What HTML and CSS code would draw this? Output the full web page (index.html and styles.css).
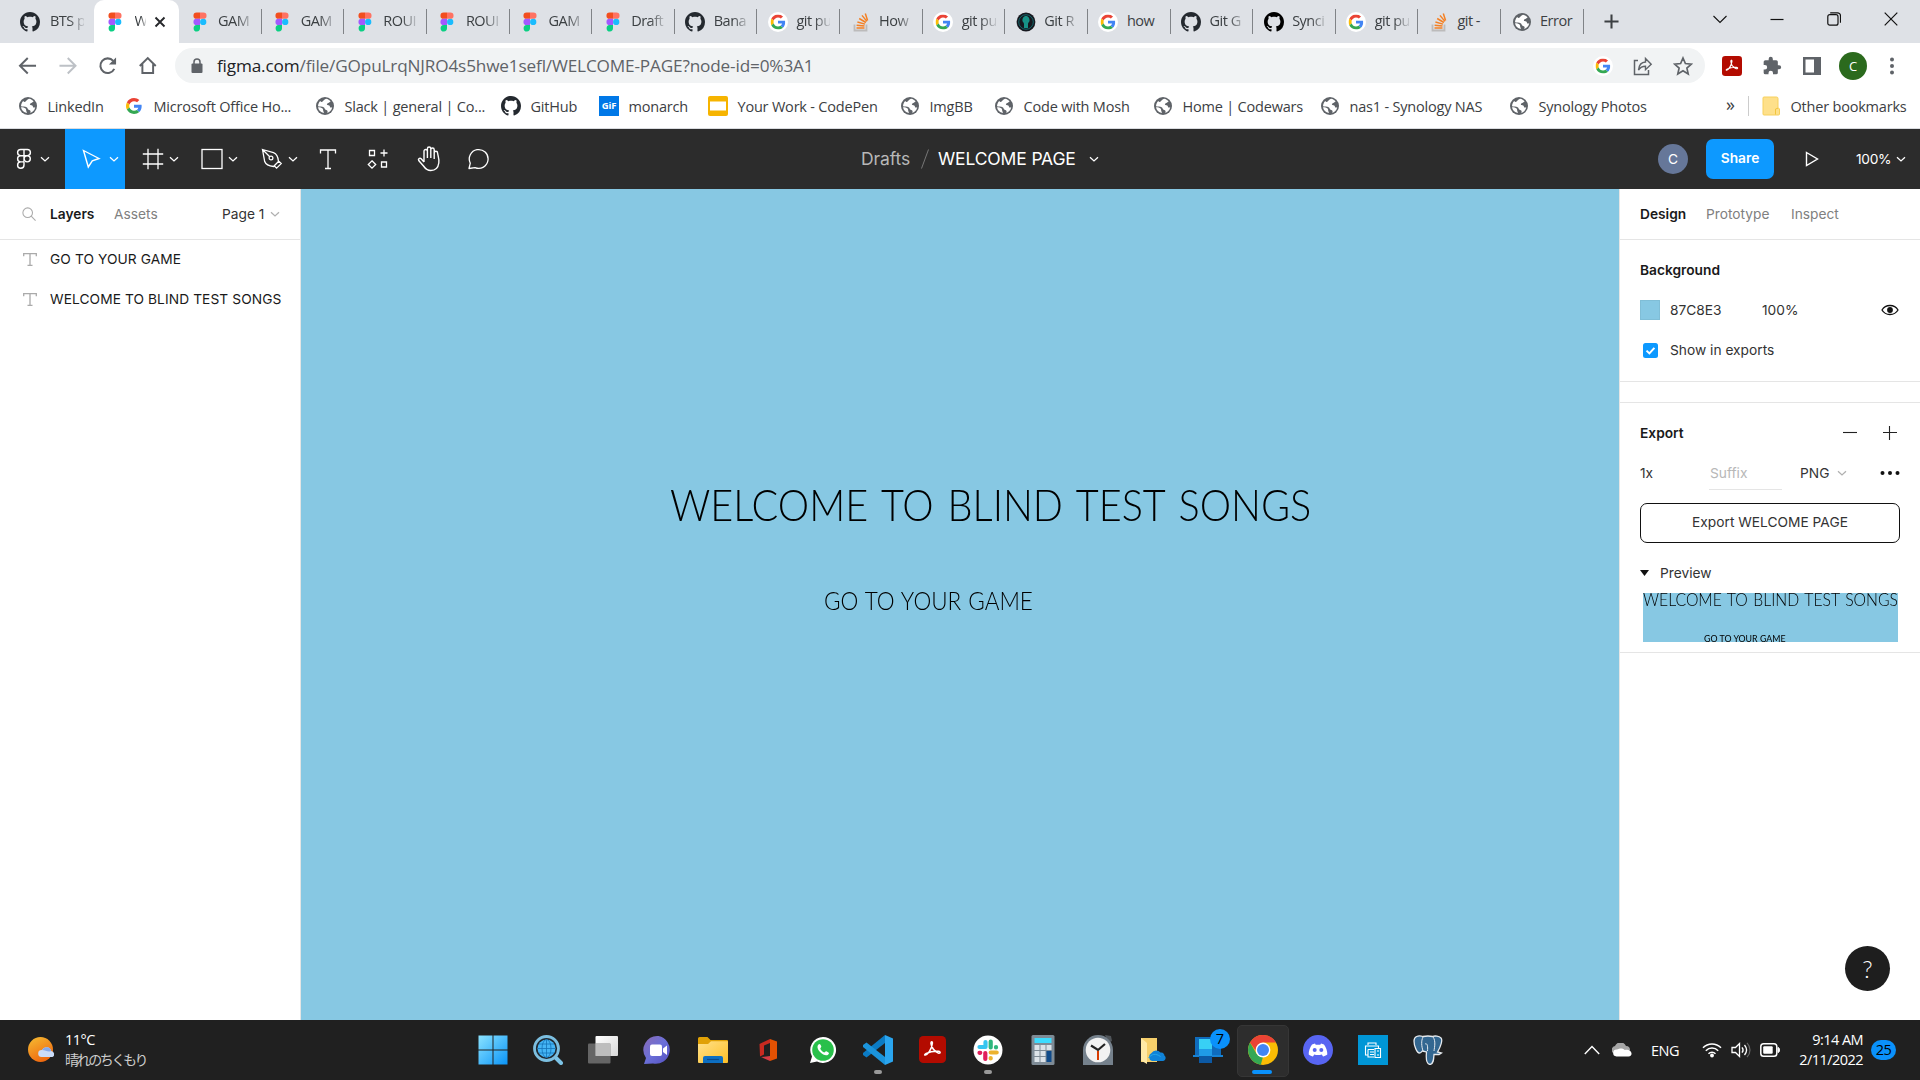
FILE: index.html
```html
<!DOCTYPE html>
<html lang="en">
<head>
<meta charset="utf-8">
<title>WELCOME PAGE</title>
<link rel="stylesheet" href="styles.css">
</head>
<body>
<svg class="defs" aria-hidden="true">
  <defs>
    <linearGradient id="win" x1="0" y1="0" x2="1" y2="1"><stop offset="0" stop-color="#8be3ff"/><stop offset="1" stop-color="#0a94f7"/></linearGradient>
    <linearGradient id="sun" x1="0" y1="0" x2=".5" y2="1"><stop offset="0" stop-color="#f5bd33"/><stop offset="1" stop-color="#ef6a10"/></linearGradient>
    <linearGradient id="fold" x1="0" y1="0" x2="1" y2="1"><stop offset="0" stop-color="#ffe18a"/><stop offset="1" stop-color="#fdbf27"/></linearGradient>
    <linearGradient id="chat" x1="0" y1="0" x2="1" y2="1"><stop offset="0" stop-color="#8a6bb5"/><stop offset=".5" stop-color="#6a6fd8"/><stop offset="1" stop-color="#5450c0"/></linearGradient>
    <linearGradient id="glass" x1="0" y1="0" x2="1" y2="1"><stop offset="0" stop-color="#fff"/><stop offset="1" stop-color="#d8d8d8"/></linearGradient>
  </defs>
  <symbol id="github" viewBox="0 0 16 16"><path d="M8 0C3.58 0 0 3.58 0 8c0 3.54 2.29 6.53 5.47 7.59.4.07.55-.17.55-.38 0-.19-.01-.82-.01-1.49-2.01.37-2.53-.49-2.69-.94-.09-.23-.48-.94-.82-1.13-.28-.15-.68-.52-.01-.53.63-.01 1.08.58 1.23.82.72 1.21 1.87.87 2.33.66.07-.52.28-.87.51-1.07-1.78-.2-3.64-.89-3.64-3.95 0-.87.31-1.59.82-2.15-.08-.2-.36-1.02.08-2.12 0 0 .67-.21 2.2.82.64-.18 1.32-.27 2-.27s1.36.09 2 .27c1.53-1.04 2.2-.82 2.2-.82.44 1.1.16 1.92.08 2.12.51.56.82 1.27.82 2.15 0 3.07-1.87 3.75-3.65 3.95.29.25.54.73.54 1.48 0 1.07-.01 1.93-.01 2.2 0 .21.15.46.55.38A8.01 8.01 0 0 0 16 8c0-4.42-3.58-8-8-8z" fill="currentColor"/></symbol>
  <symbol id="figma" viewBox="0 0 20 20"><path d="M6.600.500H10v6.300H6.600a3.150 3.150 0 0 1 0-6.300z" fill="#f24e1e"/><path d="M10 .500h3.400a3.150 3.150 0 0 1 0 6.300H10z" fill="#ff7262"/><path d="M6.600 6.800H10v6.300H6.600a3.150 3.150 0 0 1 0-6.300z" fill="#a259ff"/><circle cx="13.200" cy="9.950" r="3.150" fill="#1abcfe"/><path d="M6.600 13.100H10v3.200a3.200 3.200 0 1 1-3.400-3.200z" fill="#0acf83"/></symbol>
  <symbol id="g" viewBox="0 0 48 48"><path fill="#EA4335" d="M24 9.5c3.54 0 6.71 1.22 9.21 3.6l6.85-6.85C35.9 2.38 30.47 0 24 0 14.62 0 6.51 5.38 2.56 13.22l7.98 6.19C12.43 13.72 17.74 9.5 24 9.5z"/><path fill="#4285F4" d="M46.98 24.55c0-1.57-.15-3.09-.38-4.55H24v9.02h12.94c-.58 2.96-2.26 5.48-4.78 7.18l7.73 6c4.51-4.18 7.09-10.36 7.09-17.65z"/><path fill="#FBBC05" d="M10.53 28.59c-.48-1.45-.76-2.99-.76-4.59s.27-3.14.76-4.59l-7.98-6.19C.92 16.46 0 20.12 0 24c0 3.88.92 7.54 2.56 10.78l7.97-6.19z"/><path fill="#34A853" d="M24 48c6.48 0 11.93-2.13 15.89-5.81l-7.73-6c-2.15 1.45-4.92 2.3-8.16 2.3-6.26 0-11.57-4.22-13.47-9.91l-7.98 6.19C6.51 42.62 14.62 48 24 48z"/></symbol>
  <symbol id="gdisc" viewBox="0 0 20 20"><circle cx="10" cy="10" r="10" fill="#fff"/><use href="#g" x="2.500" y="2.500" width="15" height="15"/></symbol>
  <symbol id="stack" viewBox="0 0 20 20"><path d="M3.500 12.500v6h12v-6" fill="none" stroke="#bcbbbb" stroke-width="1.800"/><path d="M5.500 16h8M5.600 13.200l7.900.8M6.400 10l7.600 2.100M8.200 6.500l6.700 4M11 3.400l4.900 6M14.300 1.600l2.300 7" fill="none" stroke="#f48024" stroke-width="1.500"/></symbol>
  <symbol id="kraken" viewBox="0 0 20 20"><circle cx="10" cy="10" r="9.400" fill="#16181f"/><circle cx="10" cy="10" r="7.300" fill="none" stroke="#11666a" stroke-width="1"/><path d="M10 4c2.600 0 3.600 2.600 3.600 4.600 0 1.500-1.600 2-1.600 3.300V16H8v-4.100c0-1.300-1.600-1.800-1.600-3.300 0-2 1-4.600 3.600-4.600z" fill="#179287"/></symbol>
  <symbol id="globe" viewBox="0 0 20 20"><circle cx="10" cy="10" r="9" fill="#5f6368"/><path d="M11 2.800c2 .3 3.600 1.300 4.600 2.700-1 .4-1.300 1.300-2.400 1.600-1.200.3-1.800 1.600-.8 2 1.500.3 2.500.6 2.600 1.800.1.800 1 .8 2.200.4-.4 2.600-2.300 4.900-4.900 5.700.7-1.700.2-2.800-1.200-3.100-1.500-.4-1.300-2.200-2.500-2.700-1.400-.5-3.600-.4-5.600-.9.100-2 .8-4 2.300-5.300.6 1.300 1.600 1.300 2.300.6.700-.7 1.200-1.700 3.400-2.800z" fill="#fff"/><path d="M3 11.300c2 .1 3.500.4 4.600 1.100.8 1 .3 1.700.8 2.900.2.700.6 1.200.5 1.700C5.600 16.600 3.400 14.300 3 11.300z" fill="#fff"/></symbol>
  <symbol id="chev" viewBox="0 0 10 10"><path d="M1 3.200l4 3.800 4-3.800" fill="none" stroke="currentColor" stroke-width="1.250"/></symbol>
  <symbol id="textT" viewBox="0 0 14 13"><path d="M.700 3.300V.700h12.600v2.600M7 .700v11.600M4.500 12.300h5" fill="none" stroke="currentColor" stroke-width="1.300"/></symbol>
  <symbol id="acro" viewBox="0 0 28 28"><rect width="28" height="28" rx="4.500" fill="#b30b00"/><path d="M6.500 19.800c2.500-.500 6.600-5.500 7.400-12.300.2-2.300-1.700-2.100-1.500.2.400 3.800 3.400 8.400 7.600 10 2.200.7 2.700-1.600.3-1.800-4-.3-9.300.6-12.800 2.300-1.500.8-2.200 1.600-1 1.600z" fill="none" stroke="#fff" stroke-width="1.600"/></symbol>
  <symbol id="logoF" viewBox="0 0 16 22"><path d="M8 1.500v12M8 1.500H4.700a3 3 0 0 0 0 6.200H8m0-6.200h3.300a3 3 0 0 1 0 6.200H8m0 0H4.700a3 3 0 0 0 0 6.200H8m3.200-6.200a3.100 3.100 0 1 1 0 6.200 3.100 3.100 0 0 1 0-6.200M8 13.900v3.200a3.200 3.200 0 1 1-3.300-3.200" fill="none" stroke="#fff" stroke-width="1.400"/></symbol>
</svg>

<header class="tabstrip">
  <div class="tab first"><svg class="fav"><use href="#github"/></svg><span>BTS p</span></div>
  <div class="tab active"><svg class="fav"><use href="#figma"/></svg><span>W</span><svg class="close" viewBox="0 0 12 12"><path d="M1.500 1.500l9 9m0-9l-9 9" stroke="#26282b" stroke-width="1.900"/></svg></div>
  <div class="tab"><svg class="fav"><use href="#figma"/></svg><span>GAM</span></div>
  <div class="tab"><svg class="fav"><use href="#figma"/></svg><span>GAM</span></div>
  <div class="tab"><svg class="fav"><use href="#figma"/></svg><span>ROUI</span></div>
  <div class="tab"><svg class="fav"><use href="#figma"/></svg><span>ROUI</span></div>
  <div class="tab"><svg class="fav"><use href="#figma"/></svg><span>GAM</span></div>
  <div class="tab"><svg class="fav"><use href="#figma"/></svg><span>Draft</span></div>
  <div class="tab"><svg class="fav"><use href="#github"/></svg><span>Bana</span></div>
  <div class="tab"><svg class="fav"><use href="#gdisc"/></svg><span>git pu</span></div>
  <div class="tab"><svg class="fav"><use href="#stack"/></svg><span>How</span></div>
  <div class="tab"><svg class="fav"><use href="#gdisc"/></svg><span>git pu</span></div>
  <div class="tab"><svg class="fav"><use href="#kraken"/></svg><span>Git R</span></div>
  <div class="tab"><svg class="fav"><use href="#gdisc"/></svg><span class="solid">how</span></div>
  <div class="tab"><svg class="fav"><use href="#github"/></svg><span>Git G</span></div>
  <div class="tab"><svg class="fav black"><use href="#github"/></svg><span>Synci</span></div>
  <div class="tab"><svg class="fav"><use href="#gdisc"/></svg><span>git pu</span></div>
  <div class="tab"><svg class="fav"><use href="#stack"/></svg><span class="solid">git -</span></div>
  <div class="tab"><svg class="fav"><use href="#globe"/></svg><span class="solid">Error</span></div>
  <svg class="newtab" viewBox="0 0 16 16"><path d="M8 .500v15M.500 8h15" stroke="#3c4043" stroke-width="2.200"/></svg>
  <div class="winctl">
    <svg viewBox="0 0 14 14"><path d="M.500 4l6.500 6.500L13.500 4" fill="none" stroke="#111" stroke-width="1.100"/></svg>
    <svg viewBox="0 0 14 14"><path d="M.500 7.500h13" stroke="#111" stroke-width="1.200"/></svg>
    <svg viewBox="0 0 14 14"><rect x=".8" y="2.700" width="10.200" height="10.500" rx="2" fill="none" stroke="#111" stroke-width="1.200"/><path d="M3.200.8h7.300a3 3 0 0 1 3 3v7" fill="none" stroke="#111" stroke-width="1.200"/></svg>
    <svg viewBox="0 0 14 14"><path d="M.7.7l12.600 12.600m0-12.600L.7 13.300" stroke="#111" stroke-width="1.200"/></svg>
  </div>
</header>

<div class="address">
  <div class="nav">
    <svg viewBox="0 0 20 20"><path d="M18.500 10H2.500M10 2l-8 8 8 8" fill="none" stroke="#5f6368" stroke-width="2"/></svg>
    <svg viewBox="0 0 20 20"><path d="M1.500 10h16M10 2l8 8-8 8" fill="none" stroke="#bdc1c6" stroke-width="2"/></svg>
    <svg viewBox="0 0 20 20"><path d="M16.700 13.200A7.500 7.500 0 1 1 15.600 5" fill="none" stroke="#5f6368" stroke-width="2.100"/><path d="M18.500 1.500v7.300h-7.300z" fill="#5f6368"/></svg>
    <svg viewBox="0 0 20 20"><path d="M4.500 8.500v9h11v-9M1.800 10.200L10 2.200l8.200 8" fill="none" stroke="#5f6368" stroke-width="2"/></svg>
  </div>
  <div class="omnibox">
    <svg class="lock" viewBox="0 0 12 16"><rect x=".5" y="5.500" width="11" height="9.500" rx="1" fill="#5f6368"/><path d="M3 6V4a3 3 0 0 1 6 0v2" fill="none" stroke="#5f6368" stroke-width="1.500"/></svg>
    <span class="url"><b>figma.com</b>/file/GOpuLrqNJRO4s5hwe1sefl/WELCOME-PAGE?node-id=0%3A1</span>
    <svg class="obi" viewBox="0 0 20 20"><use href="#gdisc"/></svg>
    <svg class="obi" viewBox="0 0 20 20"><path d="M5 4.500H1.500v14h14V14" fill="none" stroke="#5f6368" stroke-width="1.500"/><path d="M5.500 14c.5-5 3-7.800 7-8V2.500l5.700 5.700-5.700 5.500v-3.500c-3 0-5.200 1-7 3.800z" fill="none" stroke="#5f6368" stroke-width="1.400"/></svg>
    <svg class="obi" viewBox="0 0 20 20"><path d="M10 2l2.400 5.500 6 .6-4.500 4 1.300 5.800L10 14.800l-5.200 3.100 1.300-5.800-4.500-4 6-.6z" fill="none" stroke="#5f6368" stroke-width="1.700"/></svg>
  </div>
  <div class="ext">
    <svg viewBox="0 0 28 28"><use href="#acro"/></svg>
    <svg viewBox="0 0 24 24"><path d="M20.500 11H19V7a2 2 0 0 0-2-2h-4V3.500a2.500 2.500 0 0 0-5 0V5H4a2 2 0 0 0-2 2v3.800h1.500a2.700 2.700 0 0 1 0 5.400H2V20a2 2 0 0 0 2 2h3.800v-1.500a2.700 2.700 0 0 1 5.400 0V22H17a2 2 0 0 0 2-2v-4h1.500a2.500 2.500 0 0 0 0-5z" fill="#5f6368"/></svg>
    <svg viewBox="0 0 20 20"><path d="M1 1h18v18H1zM3.500 3.500v13h8.500v-13z" fill="#5f6368" fill-rule="evenodd"/></svg>
    <span class="me">C</span>
    <svg viewBox="0 0 20 20"><g fill="#5f6368"><circle cx="10" cy="3.500" r="2"/><circle cx="10" cy="10" r="2"/><circle cx="10" cy="16.500" r="2"/></g></svg>
  </div>
</div>

<nav class="bookmarks">
  <a><svg class="fav"><use href="#globe"/></svg>LinkedIn</a>
  <a><svg class="fav small"><use href="#g"/></svg>Microsoft Office Ho...</a>
  <a><svg class="fav"><use href="#globe"/></svg>Slack | general | Co...</a>
  <a><svg class="fav"><use href="#github"/></svg>GitHub</a>
  <a><span class="gif">GiF</span>monarch</a>
  <a><svg class="fav" viewBox="0 0 20 20"><rect width="20" height="20" rx="2" fill="#f6b400"/><rect x="2" y="5.500" width="16" height="9" fill="#fff"/></svg>Your Work - CodePen</a>
  <a><svg class="fav"><use href="#globe"/></svg>ImgBB</a>
  <a><svg class="fav"><use href="#globe"/></svg>Code with Mosh</a>
  <a><svg class="fav"><use href="#globe"/></svg>Home | Codewars</a>
  <a><svg class="fav"><use href="#globe"/></svg>nas1 - Synology NAS</a>
  <a><svg class="fav"><use href="#globe"/></svg>Synology Photos</a>
  <span class="more">»</span>
  <a class="other"><svg class="fav" viewBox="0 0 20 20"><path d="M3 1h12.500a1.500 1.500 0 0 1 1.500 1.500V12l1.500.8V18a1 1 0 0 1-1 1H3a1 1 0 0 1-1-1V2a1 1 0 0 1 1-1z" fill="#fee08a" stroke="#f7d05c"/><path d="M14.500 18.500V13l2.500-.8" fill="none" stroke="#f2c53d"/></svg>Other bookmarks</a>
</nav>

<div class="toolbar">
  <div class="tools">
    <div class="tool t-menu"><svg class="ic-logo"><use href="#logoF"/></svg><svg class="ch"><use href="#chev"/></svg></div>
    <div class="tool t-move"><svg class="ic" viewBox="0 0 22 22"><path d="M3.500 2.500l15.500 8-6.700 2.300-4 6.200z" fill="none" stroke="#fff" stroke-width="1.400"/></svg><svg class="ch"><use href="#chev"/></svg></div>
    <div class="tool t-frame"><svg class="ic" viewBox="0 0 22 22"><path d="M6 .8v20.400M16 .8v20.400M.8 6h20.400M.8 16h20.400" stroke="#fff" stroke-width="1.300"/></svg><svg class="ch"><use href="#chev"/></svg></div>
    <div class="tool t-frame"><svg class="ic" viewBox="0 0 22 22"><rect x="1" y="1.500" width="20" height="19" fill="none" stroke="#fff" stroke-width="1.300"/></svg><svg class="ch"><use href="#chev"/></svg></div>
    <div class="tool t-frame"><svg class="ic" viewBox="0 0 22 22"><path d="M1.500 1.500l11 3.200c3.600 1.300 4.600 4.500 5 8.800l-5 5c-4.300-.4-7.500-1.400-8.800-5zM2 2l7 7M17.800 13.200l2.400 2.400-4.600 4.600-2.400-2.400" fill="none" stroke="#fff" stroke-width="1.300"/><circle cx="10" cy="10" r="1.900" fill="none" stroke="#fff" stroke-width="1.200"/></svg><svg class="ch"><use href="#chev"/></svg></div>
    <div class="tool one"><svg class="ic" viewBox="0 0 22 22"><path d="M3.500 5.500V2h15v3.500M11 2v18.500M8 20.500h6" fill="none" stroke="#fff" stroke-width="1.300"/></svg></div>
    <div class="tool one"><svg class="ic" viewBox="0 0 22 22"><path d="M2.500 2.500h5v5h-5zM14.500 14h5v5h-5zM17 1.500v7M13.500 5h7M5 12.800l3.700 3.700L5 20.200l-3.700-3.700z" fill="none" stroke="#fff" stroke-width="1.300"/></svg></div>
    <div class="tool one"><svg class="ic hand" viewBox="0 0 24 26"><path d="M7 16V5.200a1.700 1.700 0 0 1 3.400 0V12 2.700a1.700 1.700 0 0 1 3.400 0V12 3.700a1.700 1.700 0 0 1 3.400 0V13 7a1.700 1.700 0 0 1 3.400 0c.3 3 1.900 6.200 1.200 10-.6 4.500-3.600 7.500-8 7.500-3.500 0-5.500-1.800-7.300-4.500L1.700 14.500c-.9-1.500 1-3 2.500-1.700L7 16" fill="none" stroke="#fff" stroke-width="1.400"/></svg></div>
    <div class="tool one"><svg class="ic" viewBox="0 0 22 22"><path d="M1 20.500l1.300-5.300A9.400 9.400 0 1 1 7 19.600z" fill="none" stroke="#fff" stroke-width="1.300" stroke-linejoin="round"/></svg></div>
  </div>
  <div class="crumb"><span class="drafts">Drafts</span><svg class="slash" viewBox="0 0 8 20"><path d="M.500 19.500l7-19" stroke="#777"/></svg><span class="name">WELCOME PAGE</span><svg class="ch"><use href="#chev"/></svg></div>
  <div class="actions">
    <span class="avatar">C</span><span class="share">Share</span>
    <svg class="play" viewBox="0 0 14 16"><path d="M1.500 1.500L12.500 8l-11 6.500z" fill="none" stroke="#fff" stroke-width="1.400"/></svg>
    <span class="zoom">100%</span><svg class="ch"><use href="#chev"/></svg>
  </div>
</div>

<main class="work">
  <aside class="left">
    <div class="phead">
      <svg class="search" viewBox="0 0 16 16"><circle cx="6.500" cy="6.500" r="5.500" fill="none" stroke="#aaa" stroke-width="1.200"/><path d="M10.500 10.500l5 5" stroke="#aaa" stroke-width="1.200"/></svg>
      <strong>Layers</strong><span class="assets">Assets</span><span class="page">Page 1</span><svg class="ch dim"><use href="#chev"/></svg>
    </div>
    <div class="layers">
      <div class="layer"><svg><use href="#textT"/></svg>GO TO YOUR GAME</div>
      <div class="layer"><svg><use href="#textT"/></svg>WELCOME TO BLIND TEST SONGS</div>
    </div>
  </aside>
  <section class="canvas">
    <h1 class="t1">WELCOME TO BLIND TEST SONGS</h1>
    <p class="t2">GO TO YOUR GAME</p>
  </section>
  <aside class="right">
    <div class="phead"><strong>Design</strong><span class="proto">Prototype</span><span>Inspect</span></div>
    <section class="sec bg">
      <h2>Background</h2>
      <div class="row"><i class="swatch"></i><span class="hex">87C8E3</span><span>100%</span><svg class="eye" viewBox="0 0 18 12"><path d="M1 6c3.500-6 12.500-6 16 0-3.500 6-12.500 6-16 0z" fill="none" stroke="#111" stroke-width="1.300"/><circle cx="9" cy="6" r="2.900" fill="#111"/></svg></div>
      <div class="row"><svg class="check" viewBox="0 0 15 15"><rect width="15" height="15" rx="2.500" fill="#0d99ff"/><path d="M3.500 7.600l2.900 2.800 5-5.600" fill="none" stroke="#fff" stroke-width="2"/></svg><span>Show in exports</span></div>
    </section>
    <section class="sec export">
      <div class="row title"><h2>Export</h2><svg viewBox="0 0 14 14"><path d="M0 6.500h14" stroke="#222" stroke-width="1.100"/></svg><svg viewBox="0 0 14 14"><path d="M0 6.500h14M6.500 0v14" stroke="#222" stroke-width="1.100"/></svg></div>
      <div class="row opts"><span class="scale">1x</span><span class="suffix">Suffix</span><span class="png">PNG</span><svg class="ch dim"><use href="#chev"/></svg><svg class="dots" viewBox="0 0 20 6"><g fill="#111"><circle cx="2.500" cy="3" r="2"/><circle cx="10" cy="3" r="2"/><circle cx="17.500" cy="3" r="2"/></g></svg></div>
      <div class="btn">Export WELCOME PAGE</div>
      <div class="row prev"><svg viewBox="0 0 9 6"><path d="M0 0h9L4.500 6z" fill="#111"/></svg>Preview</div>
      <div class="thumb"><span class="m1">WELCOME TO BLIND TEST SONGS</span><span class="m2">GO TO YOUR GAME</span></div>
    </section>
    <div class="help">?</div>
  </aside>
</main>

<footer class="taskbar">
  <div class="weather">
    <svg viewBox="0 0 28 28"><circle cx="12.500" cy="13.500" r="12.500" fill="url(#sun)"/><path d="M13.500 21a3.500 3.500 0 0 1 .4-7 5 5 0 0 1 9.300 1 3.200 3.200 0 0 1 1.300 6z" fill="#cbdcf8"/><path d="M14 14a5 5 0 0 1 9.300 1c-3 1.500-6-1-9.300-1z" fill="#86a9ea"/></svg>
    <div><b>11°C</b><span>晴れのちくもり</span></div>
  </div>
  <div class="apps">
    <div class="app"><svg viewBox="0 0 30 30"><path d="M.500.500h14v14H.500zM15.500.500h14v14h-14zM.500 15.500h14v14H.500zM15.500 15.500h14v14h-14z" fill="url(#win)"/></svg></div>
    <div class="app"><svg viewBox="0 0 30 30"><path d="M22 22l6 6" stroke="#7cc3e6" stroke-width="4" stroke-linecap="round"/><circle cx="13.500" cy="13.500" r="12" fill="#202a33" stroke="#7cbfe0" stroke-width="2.800"/><circle cx="13.500" cy="13.500" r="9" fill="#45b5f5"/><path d="M4.500 13.500h18M6 9h15M6 18h15M13.500 4.500v18" stroke="#1474b8" stroke-width=".8"/><ellipse cx="13.500" cy="13.500" rx="4.500" ry="9" fill="none" stroke="#1474b8" stroke-width=".8"/></svg></div>
    <div class="app"><svg viewBox="0 0 30 30"><rect x="7.500" y="1" width="22.500" height="20" rx="1" fill="url(#glass)"/><rect x="0" y="8.500" width="22.500" height="20" rx="1" fill="#777" opacity=".8"/><path d="M7.500 8.500h15V21h-15z" fill="#bdbdbd"/></svg></div>
    <div class="app"><svg viewBox="0 0 30 30"><path d="M15.500 1A14 14 0 1 1 10 28.500L1 29l2-6A14 14 0 0 1 15.500 1z" fill="url(#chat)"/><rect x="7" y="9.500" width="12" height="11.500" rx="2" fill="#fff"/><path d="M20 13.500l4-3v9.500l-4-3z" fill="#fff"/></svg></div>
    <div class="app"><svg viewBox="0 0 30 30"><path d="M0 3.500A1.500 1.500 0 0 1 1.500 2h8l3 3H29a1 1 0 0 1 1 1v4H0z" fill="#e0a106"/><path d="M0 9h10l3-2.800h17V27a1 1 0 0 1-1 1H1a1 1 0 0 1-1-1z" fill="url(#fold)"/><path d="M5 28v-5a2 2 0 0 1 2-2h16a2 2 0 0 1 2 2v5z" fill="#0d6fc2"/><path d="M9 24.500h12" stroke="#0a4a8c" stroke-width="1.200"/></svg></div>
    <div class="app"><svg viewBox="0 0 30 30"><path d="M6.500 9L17 4v4l-6 2.500v9L7 21.500z" fill="#c92a20"/><path d="M17 4l7 2.500v17L17 26V4z" fill="#e25103"/><path d="M8 22l9-1v5z" fill="#d63b43"/></svg></div>
    <div class="app"><svg viewBox="0 0 30 30"><path d="M15 2A13 13 0 1 1 9 26.500L2 28l2-6.500A13 13 0 0 1 15 2z" fill="#fff"/><circle cx="15" cy="15" r="10.800" fill="#29c04b"/><path d="M10.500 9.500c-2 2-.8 5 1.800 7.800 2.800 2.700 6 4 8 2.200 1.400-1.300.7-2-1.500-3-1.400-.6-1.700 1-2.500 1-1.400-.3-3.700-2.600-4-3.800 0-.8 1.400-1.300.9-2.600-.8-2.200-1.700-2.600-2.700-1.600z" fill="#fff"/></svg></div>
    <div class="app run"><svg viewBox="0 0 30 30"><path d="M22 0v8L3.500 22.500 0 20V18z" fill="#0b7bc4"/><path d="M22 30v-8L3.500 7.500 0 10v2z" fill="#1b94dc"/><path d="M22 0l8 3.500v23L22 30z" fill="#2aa5ef"/></svg></div>
    <div class="app"><svg viewBox="-1 -1 30 30"><use href="#acro" width="27" height="27"/></svg></div>
    <div class="app run"><svg viewBox="0 0 30 30"><circle cx="15" cy="15" r="14.500" fill="#fff"/><g stroke-width="4.200" stroke-linecap="round"><path d="M12.500 7v5M6.500 12h5.800" stroke="#36c5f0"/><path d="M17.700 6.500v6M23 12v.5" stroke="#2eb67d"/><path d="M17.700 17.500h6M17.700 23v.5" stroke="#ecb22e"/><path d="M12.300 18v6M6.500 17.800h.8" stroke="#e01e5a"/></g></svg></div>
    <div class="app"><svg viewBox="0 0 30 30"><rect x="3.500" width="23" height="30" rx="1.500" fill="#7e8b96"/><rect x="6.500" y="3" width="17" height="5" fill="#3ddcff"/><path d="M6.500 10h5v5h-5zM12.500 10h5v5h-5zM18.500 10h5v5h-5zM6.500 16h5v5h-5zM12.500 16h5v5h-5zM6.500 22h5v5h-5zM12.500 22h5v5h-5z" fill="#dce3e9"/><path d="M18.500 16h5v11h-5z" fill="#0f4a8a"/></svg></div>
    <div class="app"><svg viewBox="0 0 30 30"><path d="M22 0l6 1 1 5-4 2z" fill="#50555a"/><path d="M15 0a15 15 0 0 1 15 15v15H0V15A15 15 0 0 1 15 0z" fill="#75818c"/><circle cx="15" cy="15" r="12.300" fill="#f2f2f2"/><path d="M8 10.500l7 4.500 7-6" fill="none" stroke="#222" stroke-width="2.200"/><path d="M15 16v9" stroke="#d83b01" stroke-width="2"/></svg></div>
    <div class="app"><svg viewBox="0 0 30 30"><path d="M3 3h16v24H3z" fill="#f6cf6b"/><path d="M3 3l6 5v21l-6-3.500z" fill="#ffe9a6"/><path d="M14 26a4.300 4.300 0 0 1-.5-8 5.500 5.500 0 0 1 9-.5c3-.3 4 2 4 3.200 2 1 1.300 5-1.500 5.300z" fill="#1083d8"/><path d="M10.500 23c3-4 7-5 12-1.500" stroke="#28a8ea" fill="none"/></svg></div>
    <div class="app"><svg viewBox="0 0 30 30"><path d="M2 2h26v19H2z" fill="#0f6cbd"/><path d="M0 20h30v2H0z" fill="#1782d4"/><path d="M6 4h13v24H6z" fill="#1f9be6"/><path d="M6 4h13v10H6z" fill="#38d0f5"/><path d="M6 21h13v7H6z" fill="#0c59a4"/></svg><em class="count">7</em></div>
    <div class="app current"><svg viewBox="0 0 30 30"><circle cx="15" cy="15" r="15" fill="#fbbc04"/><path d="M2 7.500L8.500 18.800l6.500 3-2.200 8A15 15 0 0 1 2 7.500z" fill="#34a853"/><path d="M15 7.500L8 16 2 7.500A15 15 0 0 1 28 7.500z" fill="#ea4335"/><circle cx="15" cy="15" r="7.400" fill="#fff"/><circle cx="15" cy="15" r="6" fill="#4285f4"/></svg></div>
    <div class="app"><svg viewBox="0 0 30 30"><circle cx="15" cy="15" r="15" fill="#5865f2"/><path d="M9 9.500l3-1 .7 1.200h4.600L18 8.500l3 1c2 3 3.500 6.500 3.300 10-1.500 1.200-3 1.800-4.300 2l-1.200-2c-2.500.7-5.100.7-7.600 0l-1.200 2c-1.300-.2-2.800-.8-4.300-2-.2-3.500 1.300-7 3.300-10z" fill="#fff"/><circle cx="11.700" cy="15" r="2" fill="#5865f2"/><circle cx="18.300" cy="15" r="2" fill="#5865f2"/></svg></div>
    <div class="app"><svg viewBox="0 0 30 30"><path d="M0 0h30v30H0z" fill="#0096d6"/><path d="M10 10V8h8v2M9.500 20H7.500v-9h13v2M10 14.500h6M10 14.500V22h6M12 17h4M12 19.500h4M17 13.500h5.500v9H17zM19 16h2M19 20h2" fill="none" stroke="#fff" stroke-width="1.100"/></svg></div>
    <div class="app"><svg viewBox="0 0 30 30"><path d="M10 1.500C5 0 1 1.500 1 6c0 5 3 12 5.500 12 1.500 0 2-1.500 3-2 1 0 3 .8 4 1-.5 5-.2 12 3.500 12.500 3.500-.5 3.700-5 4-10h5l2.500-1.500-4-1c3-5 5.500-12 3.500-14C26 1 22 .500 19.500 1.500c-3-.7-6-.7-9.500 0z" fill="#336791" stroke="#e6eaee" stroke-width="1.300"/><path d="M10 2c-2 4-1.500 9 0 14M20 2c3 4 1.500 10 1 14M12 9c2-1 3 1 2.500 7" fill="none" stroke="#e6eaee" stroke-width="1"/></svg></div>
  </div>
  <div class="tray">
    <svg class="up" viewBox="0 0 16 10"><path d="M.8 9L8 1.500 15.200 9" fill="none" stroke="#fff" stroke-width="1.400"/></svg>
    <svg class="cloud" viewBox="0 0 20 14"><path d="M1 10a4 4 0 0 1 2-7 6 6 0 0 1 11 0c3 0 4 2 4 4z" fill="#a5a5a5"/><path d="M4.500 13.500a3.500 3.500 0 0 1 .3-7c3-1 5-2 8 .5 3-1 6 0 6.700 3 .3 2-1 3.500-3 3.500z" fill="#fff"/></svg>
    <span class="lang">ENG</span>
    <svg class="wifi" viewBox="0 0 20 16"><path d="M1 5.800c5-5.200 13-5.200 18 0M3.800 8.800c3.500-3.600 8.900-3.600 12.400 0M6.500 11.700c2-2 5-2 7 0" fill="none" stroke="#fff" stroke-width="1.500"/><circle cx="10" cy="13.500" r="1.900" fill="#fff"/></svg>
    <svg class="vol" viewBox="0 0 20 18"><path d="M1 6.500h3.500L8.500 2.500v13l-4-4H1z" fill="none" stroke="#fff" stroke-width="1.300"/><path d="M11 6.300c1.300 1.600 1.300 3.800 0 5.400M13.500 4c2.500 3 2.500 7 0 10" fill="none" stroke="#fff" stroke-width="1.300"/><path d="M16 1.800c4 4.300 4 10.100 0 14.400" fill="none" stroke="#666" stroke-width="1.200"/></svg>
    <svg class="bat" viewBox="0 0 20 14"><rect x=".8" y=".8" width="16" height="12.400" rx="2.800" fill="none" stroke="#fff" stroke-width="1.500"/><rect x="3.200" y="3.200" width="9.500" height="7.600" rx="1" fill="#fff"/><path d="M18 4.500c2 0 2 5 0 5z" fill="#fff" stroke="#fff"/></svg>
    <div class="clock"><span>9:14 AM</span><span>2/11/2022</span></div>
    <span class="notif">25</span>
  </div>
</footer>
</body>
</html>
```
FILE: styles.css
```css
* { box-sizing: border-box; }
body {
  margin: 0; width: 1920px; height: 1080px; overflow: hidden;
  display: flex; flex-direction: column; background: #fff;
  font-family: "Open Sans", "Noto Sans", sans-serif; color: #3c4043;
}
svg { display: block; flex: none; }
.defs { position: absolute; width: 0; height: 0; }

/* browser tabs */
.tabstrip { height: 43px; flex: none; display: flex; align-items: center; background: #dee1e6; padding-left: 10px; }
.tab {
  width: 82.630px; height: 43px; flex: none; display: flex; align-items: center;
  padding-left: 10.500px; position: relative; font-size: 14.500px; letter-spacing: -.5px;
}
.tab::after { content: ""; position: absolute; right: 0; top: 9px; width: 1px; height: 25px; background: #808387; }
.tab span {
  width: 34px; margin-left: 8.500px; padding-bottom: 2px; overflow: hidden; white-space: nowrap;
  -webkit-mask-image: linear-gradient(90deg, #000 55%, rgba(0, 0, 0, .15));
  mask-image: linear-gradient(90deg, #000 55%, rgba(0, 0, 0, .15));
}
.tab .solid { -webkit-mask-image: none; mask-image: none; }
.tab.first { width: 84px; padding-left: 10px; }
.tab.first span { margin-left: 10px; }
.tab.first::after, .tab.active::after { display: none; }
.tab.active { width: 85px; background: #fff; border-radius: 10px 10px 0 0; }
.tab.active span { width: 11px; margin-left: 10px; }
.close { width: 12px; height: 12px; margin-left: 8px; }
.fav { width: 20px; height: 20px; color: #24292f; }
.fav.black { color: #000; }
.newtab { width: 15px; height: 15px; margin-left: 20px; }
.winctl { display: flex; gap: 43px; margin-left: 94px; padding-bottom: 6px; }
.winctl svg { width: 14px; height: 14px; }

/* address bar */
.address { height: 45px; flex: none; display: flex; align-items: center; padding-left: 18px; }
.nav { display: flex; gap: 20.500px; width: 157px; flex: none; }
.nav svg { width: 19.500px; height: 19.500px; }
.omnibox { width: 1530px; flex: none; height: 35px; border-radius: 18px; background: #f1f3f4; display: flex; align-items: center; padding: 0 12px 0 16px; gap: 20px; }
.lock { width: 12px; height: 16px; }
.url { flex: 1; margin-left: -6px; font-size: 17.200px; letter-spacing: -.16px; color: #5f6368; white-space: nowrap; }
.url b { font-weight: 400; color: #202124; }
.obi { width: 20px; height: 20px; }
.ext { display: flex; flex: none; width: 215px; align-items: center; padding-left: 17px; }
.ext svg { width: 20px; height: 20px; margin-right: 20px; }
.ext svg:last-child { margin-right: 0; }
.me { width: 28px; height: 28px; flex: none; margin: 0 15px 0 -3px; border-radius: 50%; background: #2b6a1d; color: #fff; font-size: 13px; line-height: 28px; text-align: center; }

/* bookmarks */
.bookmarks {
  height: 41px; flex: none; padding: 0 0 4px 18px; border-bottom: 1px solid #dadce0;
  display: grid; align-items: center; font-size: 14.500px; letter-spacing: -.2px;
  grid-template-columns: 106px 191px 186px 98px 109px 192px 94px 159px 167px 189px 211px 28px 1fr;
}
.bookmarks a { display: flex; align-items: center; gap: 9.500px; white-space: nowrap; height: 36px; }
.fav.small { width: 16px; height: 16px; margin: 0 2px; }
.gif { width: 20px; height: 20px; background: #0078e7; color: #fff; font: 700 9.500px/20px "Open Sans", sans-serif; text-align: center; }
.more { font-size: 18px; line-height: 30px; padding-left: 6px; margin-top: -4px; }
.bookmarks .other { height: 20px; border-left: 1px solid #ccc; padding-left: 12px; }

/* figma toolbar */
.toolbar { height: 60px; flex: none; background: #2c2c2c; color: #fff; display: grid; grid-template-columns: 861px 795px 1fr; align-items: center; font-family: Inter, sans-serif; }
.tools { display: flex; }
.tool { height: 60px; display: flex; align-items: center; }
.ic { width: 22px; height: 22px; }
.ic.hand { width: 24px; height: 26px; }
.ch { width: 10px; height: 10px; }
.dim { color: #b0b0b0; }
.ic-logo { width: 16px; height: 22px; }
.t-menu { width: 65px; padding-left: 16px; gap: 8px; }
.t-move { width: 60px; padding-left: 15px; gap: 7px; background: #0d99ff; }
.t-frame { width: 59.300px; padding-left: 17px; gap: 5px; }
.one { width: 50.400px; justify-content: center; }
.crumb { display: flex; align-items: center; font-size: 17.500px; }
.drafts { width: 60px; color: #b8b8b8; letter-spacing: -.1px; padding-bottom: 2px; }
.slash { width: 8px; height: 20px; margin-right: 9px; }
.name { width: 151px; letter-spacing: -.15px; white-space: nowrap; padding-bottom: 2px; }
.actions { display: flex; align-items: center; font-size: 13.750px; padding-left: 2px; }
.avatar { width: 30px; height: 30px; border-radius: 50%; background: #667799; text-align: center; line-height: 30px; }
.share { width: 68px; height: 40px; margin-left: 18px; background: #0d99ff; border-radius: 7px; font-weight: 600; line-height: 39px; text-align: center; }
.play { width: 14px; height: 16px; margin: 0 37px 0 31px; }
.zoom { width: 40px; letter-spacing: -.3px; }

/* workspace */
.work { flex: none; height: 831px; display: flex; font: 13.750px Inter, sans-serif; color: #333; }
.left { width: 301px; border-right: 1px solid #e5e5e5; }
.phead { height: 51px; display: flex; align-items: center; border-bottom: 1px solid #e5e5e5; color: #808080; }
.phead strong { font-weight: 600; color: #1a1a1a; }
.left .phead { padding-left: 22px; }
.search { width: 14px; height: 14px; margin-right: 14px; }
.left strong { width: 64px; }
.assets { width: 108px; }
.page { width: 48px; color: #333; }
.layers { margin-top: -1px; }
.layer { height: 40px; display: flex; align-items: center; padding-left: 23px; gap: 13px; color: #1a1a1a; white-space: nowrap; letter-spacing: .08px; }
.layer svg { width: 14px; height: 13px; color: #aaa; }
.canvas { width: 1318px; background: #87c8e3; padding: 285px 0 0 369px; color: #000; font-family: Lato, sans-serif; }
.t1, .t2 { margin: 0; font-weight: 300; white-space: nowrap; transform: scaleX(.9); transform-origin: 0 50%; }
.t1 { font-size: 44px; line-height: 60px; word-spacing: 3.600px; }
.t2 { font-size: 25px; line-height: 30px; margin: 51px 0 0 154px; word-spacing: 1px; }
.right { width: 301px; border-left: 1px solid #e5e5e5; display: flex; flex-direction: column; }
.right .phead { padding-left: 20px; flex: none; }
.right strong { width: 66px; }
.proto { width: 85px; }
.sec { padding: 0 20px; border-bottom: 1px solid #e5e5e5; }
.sec h2 { margin: 0; font-size: 13.750px; font-weight: 600; color: #1a1a1a; line-height: 20px; }
.bg { height: 142px; padding-top: 20px; }
.row { height: 40px; display: flex; align-items: center; }
.bg h2 { margin-bottom: 10px; }
.swatch { width: 20px; height: 20px; background: #87c8e3; border: 1px solid #80bed7; margin-right: 10px; }
.hex { width: 92px; }
.eye { width: 18px; height: 12px; margin-left: auto; margin-right: 1px; }
.check { width: 15px; height: 15px; margin: 0 12px 0 3px; }
.export { margin-top: 20px; border-top: 1px solid #e5e5e5; height: 251px; padding-top: 10px; }
.title h2 { flex: 1; }
.title svg { width: 14px; height: 14px; margin-left: 26px; }
.title { padding-right: 3px; }
.scale { width: 69px; }
.suffix { width: 73px; height: 33px; line-height: 32px; padding-left: 1px; margin-right: 18px; border-bottom: 1px solid #e5e5e5; color: #b8b8b8; align-self: flex-start; margin-top: 4px; }
.png { width: 37px; }
.dots { width: 20px; height: 6px; margin-left: auto; }
.btn { height: 40px; margin-top: 10px; border: 1px solid #111; border-radius: 7px; text-align: center; line-height: 37px; }
.prev { height: 50px; padding-top: 10px; gap: 11px; }
.prev svg { width: 9px; height: 6px; }
.thumb { width: 255px; height: 49px; margin-left: 3px; background: #87c8e3; overflow: hidden; color: #000; font-family: Lato, sans-serif; display: flex; flex-direction: column; justify-content: space-between; white-space: nowrap; }
.m1, .m2 { transform: scaleX(.9); transform-origin: 0 50%; }
.m1 { font-size: 17.500px; line-height: 13px; font-weight: 300; word-spacing: 1.400px; }
.m2 { font-size: 9.800px; line-height: 8px; margin-left: 61px; }
.help { width: 45px; height: 45px; border-radius: 50%; background: #1e1e1e; color: #fff; font: 300 24px/45px Lato, sans-serif; text-align: center; margin: auto 30px 29px auto; }

/* taskbar */
.taskbar { height: 60px; flex: none; background: #202020; color: #fff; display: grid; grid-template-columns: 465px 1119px 1fr; align-items: center; font-size: 14.500px; }
.weather { display: flex; align-items: center; padding-left: 28px; gap: 9px; font-family: "Open Sans", "Noto Sans CJK JP", sans-serif; }
.weather svg { width: 28px; height: 28px; }
.weather b, .weather span { display: block; font-weight: 400; line-height: 20px; white-space: nowrap; letter-spacing: -.5px; }
.weather span { color: #ccc; font-size: 14px; letter-spacing: -2.400px; }
.apps { display: flex; }
.app { width: 55px; height: 60px; display: flex; align-items: center; justify-content: center; position: relative; }
.app svg { width: 30px; height: 30px; }
.run::after { content: ""; position: absolute; bottom: 6px; left: 24px; width: 8px; height: 4px; border-radius: 2px; background: #999; }
.current::before { content: ""; position: absolute; left: 2px; top: 5px; width: 50px; height: 50px; border-radius: 5px; background: #2d2d2d; border: 1px solid #363636; }
.current::after { content: ""; position: absolute; bottom: 6px; left: 17px; width: 20px; height: 4px; border-radius: 2px; background: #0a91fb; }
.current svg { position: relative; }
.count { position: absolute; left: 30px; top: 9px; width: 20px; height: 20px; border-radius: 50%; background: #0a91fb; color: #000; font-style: normal; line-height: 20px; text-align: center; }
.tray { display: flex; align-items: center; }
.up { width: 16px; height: 10px; margin-right: 12px; }
.cloud { width: 20px; height: 14px; }
.lang { width: 51px; padding-left: 19px; margin-right: 19px; letter-spacing: -.5px; }
.wifi { width: 20px; height: 16px; }
.vol { width: 20px; height: 18px; margin: 0 9px; }
.bat { width: 20px; height: 14px; }
.clock { width: 83px; text-align: right; letter-spacing: -.55px; white-space: nowrap; }
.clock span { display: block; line-height: 20px; }
.notif { width: 25px; height: 20px; margin-left: 8px; border-radius: 10px; background: #0a91fb; color: #000; line-height: 20px; text-align: center; letter-spacing: -.5px; }
```
